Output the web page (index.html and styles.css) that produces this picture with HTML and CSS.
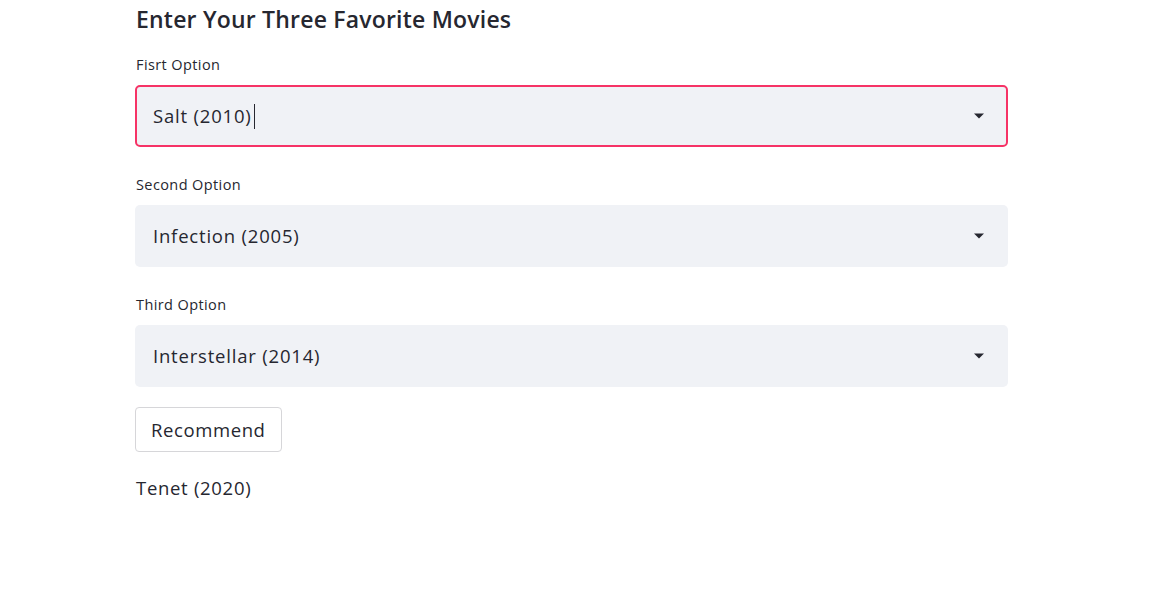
FILE: index.html
```html
<!DOCTYPE html>
<html>
<head>
<meta charset="utf-8">
<link rel="stylesheet" href="styles.css">
</head>
<body>
<main class="page">
  <h3 class="title">Enter Your Three Favorite Movies</h3>
  <div class="field">
    <label class="label">Fisrt Option</label>
    <div class="select focused">
      <span class="value">Salt (2010)<span class="caret"></span></span>
      <svg class="arrow" width="12" height="8" viewBox="0 0 12 8"><path d="M1 1.5h10L6 6.5z" fill="#262730"/></svg>
    </div>
  </div>
  <div class="field">
    <label class="label">Second Option</label>
    <div class="select">
      <span class="value">Infection (2005)</span>
      <svg class="arrow" width="12" height="8" viewBox="0 0 12 8"><path d="M1 1.5h10L6 6.5z" fill="#262730"/></svg>
    </div>
  </div>
  <div class="field">
    <label class="label">Third Option</label>
    <div class="select">
      <span class="value">Interstellar (2014)</span>
      <svg class="arrow" width="12" height="8" viewBox="0 0 12 8"><path d="M1 1.5h10L6 6.5z" fill="#262730"/></svg>
    </div>
  </div>
  <div class="actions">
    <button class="btn">Recommend</button>
  </div>
  <p class="result">Tenet (2020)</p>
</main>
</body>
</html>
```

FILE: styles.css
```css
html, body {
  margin: 0;
  padding: 0;
  background: #ffffff;
}
body {
  font-family: "Open Sans", "Noto Sans", sans-serif;
  color: #262730;
}
.page {
  width: 873px;
  margin-left: 135px;
  display: flex;
  flex-direction: column;
}
.title {
  margin: 4px 0 0 1px;
  font-size: 23px;
  font-weight: 600;
  line-height: 30px;
  letter-spacing: 0.2px;
  color: #262730;
}
.field {
  display: flex;
  flex-direction: column;
}
.field + .field {
  margin-top: 28px;
}
.title + .field {
  margin-top: 21px;
}
.label {
  font-size: 14.5px;
  line-height: 20px;
  letter-spacing: 0.4px;
  margin-left: 1px;
  margin-bottom: 10px;
  color: #262730;
}
.select {
  box-sizing: border-box;
  height: 62px;
  background: #f0f2f6;
  border: 2px solid transparent;
  border-radius: 5px;
  display: flex;
  align-items: center;
  justify-content: space-between;
  padding: 0 21px 0 16px;
}
.select.focused {
  border-color: #f63366;
}
.value {
  font-size: 18.5px;
  line-height: 26px;
  letter-spacing: 0.8px;
  color: #262730;
  display: flex;
  align-items: center;
}
.caret {
  display: inline-block;
  width: 1px;
  height: 25px;
  background: #262730;
  margin-left: 2px;
}
.arrow {
  display: block;
}
.actions {
  margin-top: 20px;
  display: flex;
}
.btn {
  box-sizing: border-box;
  height: 45px;
  padding: 0 15px;
  background: #ffffff;
  border: 1px solid #d6d6d9;
  border-radius: 4px;
  font-family: "Open Sans", "Noto Sans", sans-serif;
  font-size: 18.5px;
  letter-spacing: 0.6px;
  color: #262730;
}
.result {
  margin: 23px 0 0 1px;
  font-size: 18.5px;
  line-height: 26px;
  letter-spacing: 0.7px;
  color: #262730;
}
```
